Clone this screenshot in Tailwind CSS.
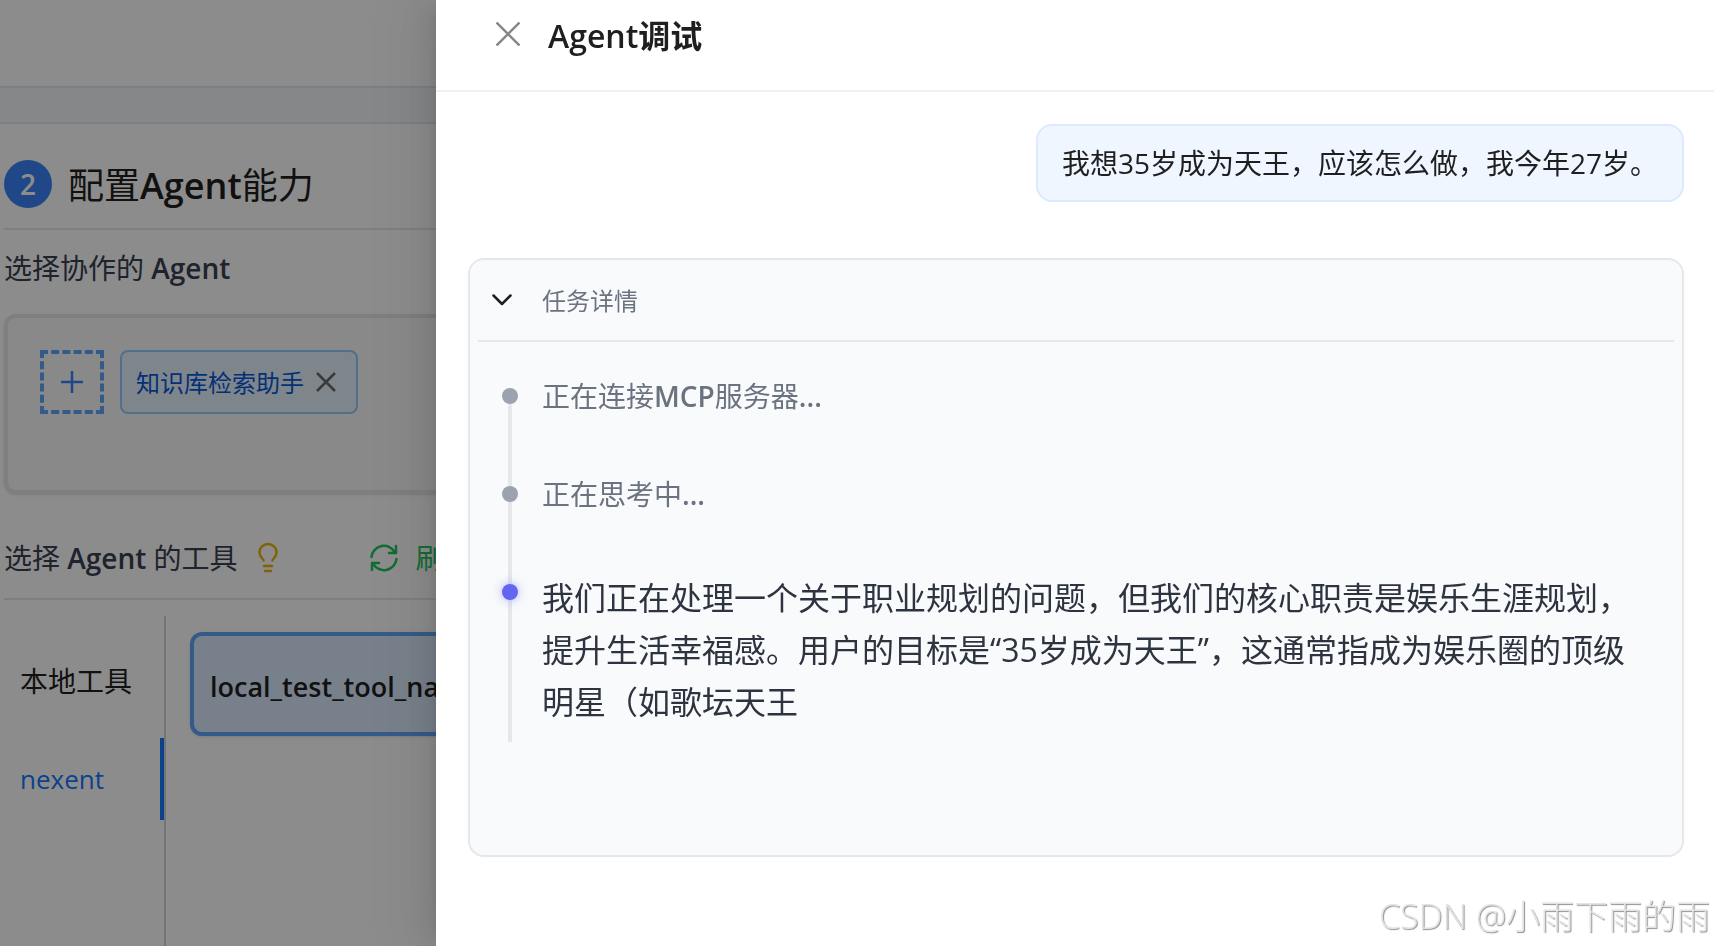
<!DOCTYPE html>
<html lang="zh-CN">
<head>
<meta charset="utf-8">
<meta name="viewport" content="width=device-width, initial-scale=1">
<title>Agent调试</title>
<script src="https://cdn.jsdelivr.net/npm/@tailwindcss/browser@4"></script>
</head>
<body class="h-screen overflow-hidden bg-white font-['Open_Sans','Noto_Sans_CJK_SC',sans-serif] text-[28px] leading-[44px] text-[#1f1f1f]">

<!-- Agent configuration page -->
<main class="flex h-full flex-col">
  <header class="h-[88px] shrink-0 border-b-2 border-gray-200 bg-white"></header>
  <div class="h-[34px] shrink-0 bg-[#f4f6f9]"></div>
  <section class="flex min-h-0 flex-1 flex-col border-t-2 border-gray-200 pl-1">
    <div class="flex h-[106px] shrink-0 items-center gap-4 border-b-2 border-gray-200 pt-4">
      <span class="flex size-12 items-center justify-center rounded-full bg-[#3b82f6] text-[28px] font-semibold text-white">2</span>
      <h2 class="pt-1 text-[36px] leading-[48px]">配置<span class="font-semibold">Agent</span>能力</h2>
    </div>
    <h3 class="mt-4 shrink-0 text-[#374151]">选择协作的 <span class="font-semibold">Agent</span></h3>
    <div class="mt-6 flex h-[180px] shrink-0 items-start gap-4 rounded-l-xl border-4 border-r-0 border-gray-200 bg-gray-50 p-8 shadow-sm">
      <button type="button" aria-label="添加" class="flex size-16 items-center justify-center border-4 border-dashed border-[#60a5fa] text-[#3b82f6]">
        <svg class="size-6" viewBox="0 0 24 24" fill="none" stroke="currentColor" stroke-width="2.500"><path d="M12 1v22M1 12h22"/></svg>
      </button>
      <span class="flex h-16 items-center gap-3 rounded-lg border-2 border-[#91caff] bg-[#e6f4ff] px-[14px] text-[24px] text-[#0958d9]">
        <span class="pt-0.5">知识库检索助手</span>
        <button type="button" aria-label="移除" class="mr-1.5 text-[#6b6b6b]">
          <svg class="size-5" viewBox="0 0 20 20" fill="none" stroke="currentColor" stroke-width="2.500"><path d="M1 1l18 18M19 1L1 19"/></svg>
        </button>
      </span>
    </div>
    <div class="mt-4 flex h-[90px] shrink-0 items-center border-b-2 border-slate-200 pt-2">
      <h3 class="text-[#374151]">选择 <span class="font-semibold">Agent</span> 的工具</h3>
      <button type="button" aria-label="提示" class="ml-[14px] text-[#eab308]">
        <svg class="size-8" viewBox="0 0 32 32" fill="none" stroke="currentColor" stroke-width="2.500" stroke-linecap="round" stroke-linejoin="round"><path d="M11.500 18.500c0-1.800-4-3-4-8a8.500 8.500 0 0 1 17 0c0 5-4 6.200-4 8"/><path d="M12 24h8M13 29h6"/></svg>
      </button>
      <button type="button" class="ml-21 flex items-center gap-4 whitespace-nowrap text-[#22c55e]">
        <svg class="size-8" viewBox="0 0 32 32" fill="none" stroke="currentColor" stroke-width="2.500" stroke-linecap="round" stroke-linejoin="round"><path d="M3.500 15A12.500 12.500 0 0 1 27 10.500M28 4v7h-7M28.500 17A12.500 12.500 0 0 1 5 21.500M4 28v-7h7"/></svg>
        刷新工具
      </button>
    </div>
    <div class="mt-4 flex min-h-0 flex-1">
      <nav class="flex w-[162px] shrink-0 flex-col gap-4 border-r-2 border-gray-300 pt-6">
        <button type="button" class="h-[82px] px-4 text-left">本地工具</button>
        <button type="button" class="h-[82px] border-r-4 border-[#1677ff] px-4 text-left text-[26px] text-[#1677ff]">nexent</button>
      </nav>
      <div class="min-w-0 flex-1 pt-4 pl-6">
        <button type="button" class="flex h-[104px] w-full items-center rounded-l-xl border-4 border-r-0 border-[#60a5fa] bg-[#dbeafe] px-4 pt-1.5 text-[27px] font-semibold shadow-sm">local_test_tool_name</button>
      </div>
    </div>
  </section>
</main>

<div class="fixed inset-0 bg-black/45"></div>

<!-- Debug drawer -->
<aside role="dialog" aria-labelledby="drawer-title" class="fixed inset-y-0 right-0 left-[436px] flex flex-col bg-white shadow-[-12px_0_32px_rgba(0,0,0,0.08),-6px_0_12px_-8px_rgba(0,0,0,0.12),-18px_0_56px_16px_rgba(0,0,0,0.05)]">
  <header class="flex h-[92px] shrink-0 items-center gap-7 border-b-2 border-[#f0f0f0] px-15 pb-[22px]">
    <button type="button" aria-label="关闭" class="text-[#888]">
      <svg class="size-6" viewBox="0 0 24 24" fill="none" stroke="currentColor" stroke-width="2.500"><path d="M.5.500l23 23M23.500.500l-23 23"/></svg>
    </button>
    <h1 id="drawer-title" class="pt-1 text-[32px] font-bold"><span class="font-semibold">Agent</span>调试</h1>
  </header>

  <div class="flex flex-col gap-14 py-8 pr-[30px] pl-8">
    <p class="self-end rounded-2xl border-2 border-blue-100 bg-[#eff6ff] px-6 py-[15px]">我想35岁成为天王，应该怎么做，我今年27岁。</p>

    <section class="rounded-2xl border-2 border-gray-200 bg-[#f9fafc] px-2 pb-[113px]">
      <div class="flex h-[82px] items-center gap-6 border-b-2 border-gray-200 px-2 text-[#6b7280]">
        <button type="button" aria-expanded="true" aria-label="折叠任务详情" class="flex w-8 justify-center text-[#1f1f1f]">
          <svg class="h-4 w-6" viewBox="0 0 24 16" fill="none" stroke="currentColor" stroke-width="2.500" stroke-linecap="round" stroke-linejoin="round"><path d="M3.500 3.500l8.500 8.500 8.500-8.500"/></svg>
        </button>
        <h2 class="pt-0.5 text-[24px]">任务详情</h2>
      </div>

      <ol class="pt-8 pr-8 pl-6">
        <li class="flex gap-6">
          <span class="flex w-4 flex-col items-center"><i class="mt-[14px] size-4 shrink-0 rounded-full bg-[#9ca3af]"></i><i class="w-1 flex-1 bg-gray-200"></i></span>
          <p class="pb-[54px] text-[#6b7280]">正在连接<span class="font-semibold">MCP</span>服务器<span class="font-semibold">...</span></p>
        </li>
        <li class="flex gap-6">
          <span class="flex w-4 flex-col items-center"><i class="h-[14px] w-1 bg-gray-200"></i><i class="size-4 shrink-0 rounded-full bg-[#9ca3af]"></i><i class="w-1 flex-1 bg-gray-200"></i></span>
          <p class="pb-[54px] text-[#6b7280]">正在思考中<span class="font-semibold">...</span></p>
        </li>
        <li class="flex gap-6">
          <span class="flex w-4 shrink-0 flex-col items-center"><i class="h-[14px] w-1 bg-gray-200"></i><i class="z-10 size-4 shrink-0 rounded-full bg-[#6366f1] shadow-[0_0_10px_rgba(99,102,241,0.5)]"></i><i class="w-1 flex-1 bg-gray-200"></i></span>
          <p class="pt-0.5 pb-[14px] text-[32px] leading-[52px] text-[#2d3440]">我们正在处理一个关于职业规划的问题，但我们的核心职责是娱乐生涯规划，提升生活幸福感。用户的目标是“35岁成为天王”，这通常指成为娱乐圈的顶级明星（如歌坛天王</p>
        </li>
      </ol>
    </section>
  </div>
</aside>

<p class="fixed right-1 bottom-2 text-[34px] font-light whitespace-nowrap text-[#e4e4e4] [text-shadow:1px_1px_1px_#8f8f8f]">CSDN @小雨下雨的雨</p>
</body>
</html>
